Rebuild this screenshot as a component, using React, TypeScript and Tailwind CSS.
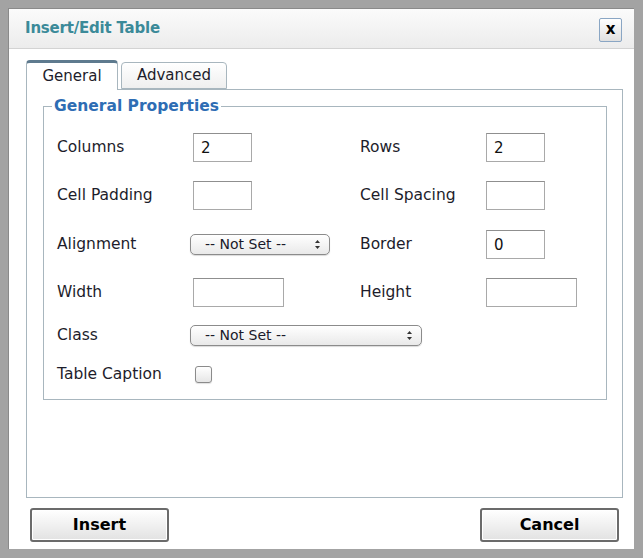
import React from 'react';

const font = { fontFamily: '"DejaVu Sans", "Lucida Grande", sans-serif' };

function TextBox({ value = '', wide = false }: { value?: string; wide?: boolean }) {
  return (
    <input
      readOnly
      value={value}
      className={`${wide ? 'w-[91px]' : 'w-[59px]'} h-[29px] border border-[#a9a9a9] border-t-[#8f8f8f] bg-white px-[7px] text-[15px] text-[#111] outline-none`}
    />
  );
}

function NotSet({ wide = false }: { wide?: boolean }) {
  return (
    <div
      className={`${wide ? 'w-[232px]' : 'w-[140px]'} -ml-[3px] h-[21px] flex items-center justify-between rounded-[5px] border border-[#8b8b8b] bg-gradient-to-b from-white to-[#e9e9e9] pl-[14px] pr-[8px] text-[14px] text-[#1a1a2a] shadow-[0_1px_1px_rgba(0,0,0,0.15)]`}
    >
      <span>-- Not Set --</span>
      <svg width="7" height="11" viewBox="0 0 7 11">
        <path d="M3.5 1 L6 4 H1 Z" fill="#333" />
        <path d="M3.5 10 L6 7 H1 Z" fill="#333" />
      </svg>
    </div>
  );
}

function Label({ children }: { children: React.ReactNode }) {
  return <span className="text-[15.5px] text-[#1d1d2b]">{children}</span>;
}

export default function App() {
  return (
    <div style={font} className="w-[643px] h-[558px] bg-[#a3a3a3] pt-[8px] pl-[8px] pr-[9px] pb-[9px]">
      <div className="h-full bg-white flex flex-col border-l border-t border-[#8a8a8a]">
        {/* title bar */}
        <div className="h-[40px] shrink-0 flex items-center justify-between pl-[16px] pr-[12px] bg-gradient-to-b from-[#fbfbfb] to-[#ececec] border-b border-[#d3d3d3]">
          <span className="text-[15px] font-bold text-[#3b8a99] tracking-[-0.2px]">Insert/Edit Table</span>
          <button className="w-[23px] h-[24px] mt-[2px] flex items-center justify-center rounded-[2px] border border-[#8aa6c4] bg-gradient-to-b from-white to-[#e0e0e0] text-[15px] font-bold leading-none text-black">
            x
          </button>
        </div>

        {/* tabs + panel */}
        <div className="pl-[17px] pr-[11px] pt-[12px] flex flex-col flex-1">
          <div className="flex items-end gap-[3px] h-[28px]">
            <div className="w-[92px] h-[30px] -mb-px z-10 flex items-center justify-center rounded-t-[4px] border border-[#a8b6be] border-t-[3px] border-t-[#5e7a8e] border-b-0 bg-white text-[15px] text-[#1d1d2b]">
              General
            </div>
            <div className="w-[106px] h-[27px] flex items-center justify-center rounded-t-[4px] border border-[#a8b6be] bg-gradient-to-b from-white to-[#efefef] text-[15px] text-[#1d1d2b]">
              Advanced
            </div>
          </div>
          <div className="h-[409px] border border-[#a8b6be] pl-[16px] pr-[15px] pt-[7px]">
            <fieldset className="h-[303px] border border-[#a8b6be]">
              <legend className="ml-[8px] px-[2px] text-[15.5px] font-bold leading-[18px] text-[#2e6db4]">
                General Properties
              </legend>
              <div className="pl-[13px] pt-[18px] flex flex-col">
                <div className="h-[29px] grid grid-cols-[136px_167px_126px_auto] items-center">
                  <Label>Columns</Label>
                  <TextBox value="2" />
                  <Label>Rows</Label>
                  <TextBox value="2" />
                </div>
                <div className="mt-[19px] h-[29px] grid grid-cols-[136px_167px_126px_auto] items-center">
                  <Label>Cell Padding</Label>
                  <TextBox />
                  <Label>Cell Spacing</Label>
                  <TextBox />
                </div>
                <div className="mt-[20px] h-[29px] grid grid-cols-[136px_167px_126px_auto] items-center">
                  <Label>Alignment</Label>
                  <NotSet />
                  <Label>Border</Label>
                  <TextBox value="0" />
                </div>
                <div className="mt-[19px] h-[29px] grid grid-cols-[136px_167px_126px_auto] items-center">
                  <Label>Width</Label>
                  <TextBox wide />
                  <Label>Height</Label>
                  <TextBox wide />
                </div>
                <div className="mt-[14px] h-[29px] grid grid-cols-[136px_auto] items-center">
                  <Label>Class</Label>
                  <NotSet wide />
                </div>
                <div className="mt-[10px] h-[29px] grid grid-cols-[138px_auto] items-center">
                  <Label>Table Caption</Label>
                  <div className="w-[17px] h-[17px] rounded-[3px] border border-[#8b8b8b] bg-gradient-to-b from-white to-[#e6e6e6] shadow-[0_1px_1px_rgba(0,0,0,0.12)]" />
                </div>
              </div>
            </fieldset>
          </div>
        </div>

        {/* buttons */}
        <div className="flex justify-between pl-[21px] pr-[15px] pb-[7px] pt-[10px]">
          <button className="w-[139px] h-[34px] rounded-[3px] border-2 border-[#6b6b6b] bg-gradient-to-b from-white to-[#e2e2e2] shadow-[inset_0_0_0_1px_#ffffff] text-[16px] font-bold text-black">
            Insert
          </button>
          <button className="w-[139px] h-[34px] rounded-[3px] border-2 border-[#6b6b6b] bg-gradient-to-b from-white to-[#e2e2e2] shadow-[inset_0_0_0_1px_#ffffff] text-[16px] font-bold text-black">
            Cancel
          </button>
        </div>
      </div>
    </div>
  );
}
